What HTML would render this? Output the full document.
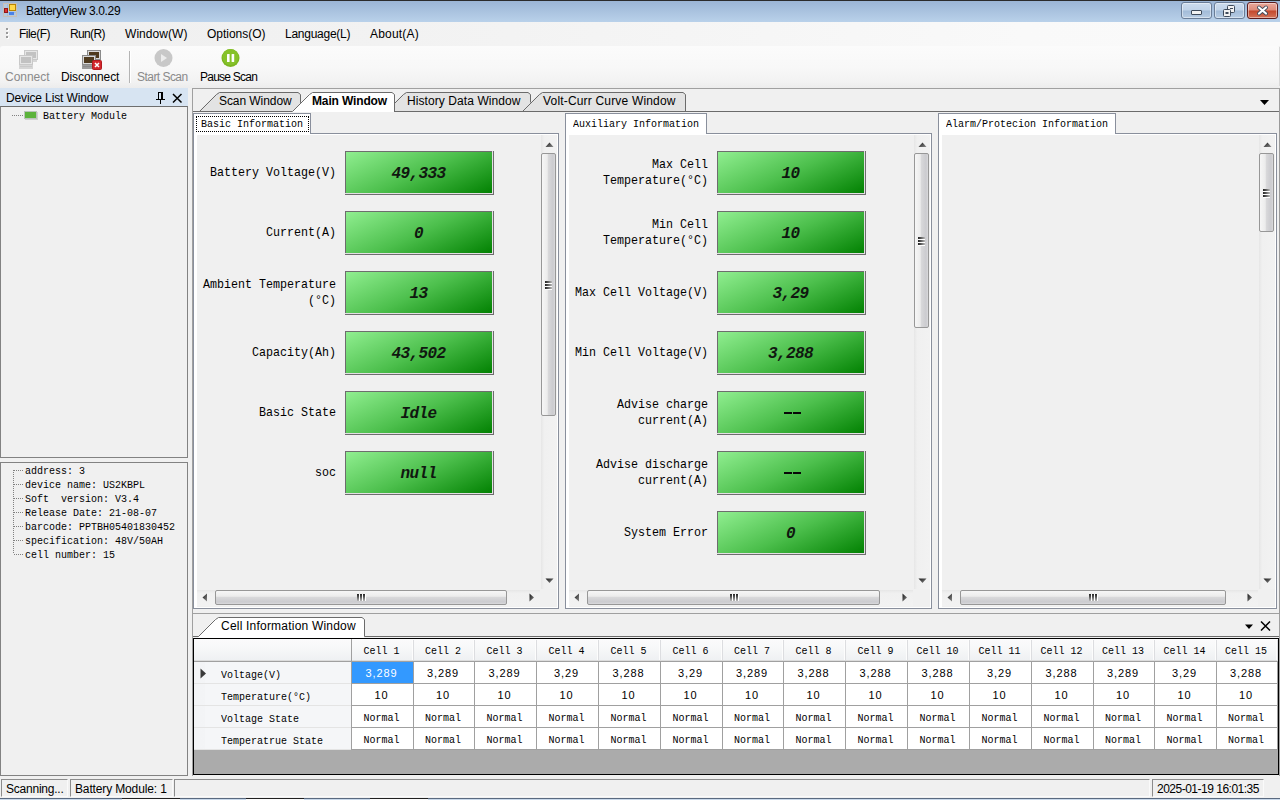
<!DOCTYPE html><html><head><meta charset="utf-8"><style>
*{margin:0;padding:0;box-sizing:border-box}
html,body{width:1280px;height:800px;overflow:hidden;background:#f0f0f0;font-family:"Liberation Sans",sans-serif;font-size:12px;color:#000;position:relative}
.a{position:absolute}
.t{position:absolute;white-space:pre;line-height:14px}
.m6{position:absolute;white-space:pre;font-family:"Liberation Mono",monospace;font-size:11px;line-height:14px;transform:scaleX(.9091);transform-origin:0 0;}
.m7{position:absolute;white-space:pre;font-family:"Liberation Mono",monospace;font-size:13px;line-height:15px;text-align:right;transform:scaleX(.8974);transform-origin:100% 0;}
.gb{position:absolute;width:149px;height:44px;border:1px solid #6d6d6d;background:linear-gradient(155deg,#90ee90 0%,#4cbf4c 50%,#008000 100%)}
.gb:after{content:"";position:absolute;left:-1px;top:-1px;right:0;bottom:0;border-right:1px solid #e4e0e4;border-bottom:1px solid #e4e0e4}
.gv{position:absolute;left:-1px;width:147px;top:13px;text-align:center;white-space:pre;font-family:"Liberation Mono",monospace;font-weight:bold;font-style:italic;font-size:16px;letter-spacing:-0.6px;line-height:18px;color:#101810}
.vthumb{position:absolute;border:1px solid #979797;border-radius:2px;background:linear-gradient(90deg,#f6f6f6 0%,#ececec 40%,#d8d8da 50%,#cbcbcf 85%,#dadadc 100%)}
.hthumb{position:absolute;border:1px solid #979797;border-radius:2px;background:linear-gradient(180deg,#f6f6f6 0%,#ececec 40%,#d8d8da 50%,#cbcbcf 85%,#dadadc 100%)}
.cell{position:absolute;height:14px;text-align:center;white-space:pre;font-family:"Liberation Mono",monospace;font-size:11px;line-height:14px;transform:scaleX(.9091);transform-origin:50% 0;}
</style></head><body>
<div class="a" style="left:0px;top:0px;width:1280px;height:1px;background:#2b2b2b"></div>
<div class="a" style="left:0px;top:1px;width:1280px;height:21px;background:linear-gradient(#9bb5d5,#b9d1ea)"></div>
<svg class="a" style="left:3px;top:3px" width="14" height="14" viewBox="0 0 14 14">
<rect x="0.5" y="0.5" width="13" height="13" fill="#b4c9de" stroke="#c9c0b6"/>
<line x1="4.5" y1="1" x2="4.5" y2="13" stroke="#a8bcd2"/><line x1="1" y1="9.5" x2="13" y2="9.5" stroke="#a8bcd2"/>
<rect x="9" y="3.5" width="4" height="0" fill="none"/>
<rect x="6.5" y="1.5" width="6" height="6" fill="#ffd84a" stroke="#b98500"/>
<rect x="1.5" y="5.5" width="3" height="4" fill="#e03030" stroke="#901818"/>
<rect x="6" y="9" width="5" height="3" fill="#4a82e8"/>
</svg>
<div class="t" style="left:26px;top:4px;letter-spacing:-0.35px;">BatteryView 3.0.29</div>
<div class="a" style="left:1181px;top:2px;width:31px;height:17px;border:1px solid #6a7d97;border-radius:3px;background:linear-gradient(#ccdcee 0%,#c0d3e8 48%,#a2bbd8 52%,#b7cce3 100%);box-shadow:inset 0 0 0 1px rgba(255,255,255,.45)"></div>
<div class="a" style="left:1214px;top:2px;width:31px;height:17px;border:1px solid #6a7d97;border-radius:3px;background:linear-gradient(#ccdcee 0%,#c0d3e8 48%,#a2bbd8 52%,#b7cce3 100%);box-shadow:inset 0 0 0 1px rgba(255,255,255,.45)"></div>
<div class="a" style="left:1247px;top:2px;width:31px;height:17px;border:1px solid #5d1c1c;border-radius:3px;background:linear-gradient(#e9a99b 0%,#dd8a78 48%,#c3472b 52%,#d47358 100%);box-shadow:inset 0 0 0 1px rgba(255,255,255,.45)"></div>
<div class="a" style="left:1191px;top:10px;width:11px;height:5px;background:#f2f2f2;border:1px solid #3e4a5a;border-radius:1px"></div>
<svg class="a" style="left:1223px;top:5px" width="13" height="12" viewBox="0 0 13 12"><rect x="4.5" y="0.5" width="7" height="7" rx="1" fill="#f2f2f2" stroke="#3e4a5a"/><rect x="0.5" y="4.5" width="7" height="7" rx="1" fill="#f2f2f2" stroke="#3e4a5a"/><rect x="2.5" y="7" width="3" height="2" fill="#3e4a5a"/><rect x="7" y="3" width="3" height="1" fill="#3e4a5a"/></svg>
<svg class="a" style="left:1256px;top:5px" width="13" height="11" viewBox="0 0 13 11"><path d="M3 2.5 L10 8.5 M10 2.5 L3 8.5" stroke="#3e4a5a" stroke-width="3.8" stroke-linecap="round"/><path d="M3 2.5 L10 8.5 M10 2.5 L3 8.5" stroke="#ffffff" stroke-width="2.2" stroke-linecap="round"/></svg>
<div class="a" style="left:0px;top:22px;width:1280px;height:24px;background:linear-gradient(90deg,#efefef 0%,#f3f3f3 40%,#f9f9f9 80%,#fafafa 100%)"></div>
<div class="a" style="left:6px;top:28px;width:2px;height:2px;background:#9a9a9a;box-shadow:1px 1px 0 #fff"></div>
<div class="a" style="left:6px;top:32px;width:2px;height:2px;background:#9a9a9a;box-shadow:1px 1px 0 #fff"></div>
<div class="a" style="left:6px;top:36px;width:2px;height:2px;background:#9a9a9a;box-shadow:1px 1px 0 #fff"></div>
<div class="t" style="left:19px;top:27px;letter-spacing:-0.53px;">File(F)</div>
<div class="t" style="left:70px;top:27px;letter-spacing:-0.63px;">Run(R)</div>
<div class="t" style="left:125px;top:27px;letter-spacing:0.06px;">Window(W)</div>
<div class="t" style="left:207px;top:27px;letter-spacing:-0.02px;">Options(O)</div>
<div class="t" style="left:285px;top:27px;letter-spacing:-0.26px;">Language(L)</div>
<div class="t" style="left:370px;top:27px;letter-spacing:0.2px;">About(A)</div>
<div class="a" style="left:0px;top:46px;width:1280px;height:42px;border-radius:3px 3px 0 0;background:linear-gradient(#fbfbfb 0%,#f8f8f8 50%,#f2f2f2 85%,#ececec 100%)"></div>
<div class="t" style="left:5px;top:70px;letter-spacing:-0.03px;color:#8a8a8a">Connect</div>
<div class="t" style="left:61px;top:70px;letter-spacing:-0.11px;">Disconnect</div>
<div class="a" style="left:129px;top:51px;width:1px;height:32px;background:#b4b4b4;box-shadow:1px 0 0 #fff"></div>
<div class="t" style="left:137px;top:70px;letter-spacing:-0.54px;color:#8a8a8a">Start Scan</div>
<div class="t" style="left:200px;top:70px;letter-spacing:-0.75px;">Pause Scan</div>
<svg class="a" style="left:18px;top:49px" width="21" height="21" viewBox="0 0 21 21">
<rect x="6.5" y="1.5" width="13" height="9" fill="#e6e6e6" stroke="#c9c9c9"/><rect x="8" y="3" width="10" height="6" fill="#c2c2c2"/>
<rect x="14" y="11" width="5" height="2" fill="#d6d6d6"/>
<rect x="1.5" y="6.5" width="13" height="9" fill="#e6e6e6" stroke="#c9c9c9"/><rect x="3" y="8" width="10" height="6" fill="#c2c2c2"/>
<rect x="1" y="16" width="14" height="4" fill="#d6d6d6"/><rect x="2" y="17" width="12" height="1" fill="#c9c9c9"/></svg>
<svg class="a" style="left:81px;top:49px" width="21" height="21" viewBox="0 0 21 21">
<rect x="6.5" y="1.5" width="13" height="9" fill="#d9d9d9" stroke="#8a8a8a"/><rect x="8" y="3" width="10" height="6" fill="#4e3a1e"/>
<rect x="14" y="11" width="5" height="2" fill="#9a9a9a"/>
<rect x="1.5" y="6.5" width="13" height="9" fill="#d9d9d9" stroke="#8a8a8a"/><rect x="3" y="8" width="10" height="6" fill="#4e3a1e"/>
<rect x="1" y="16" width="14" height="4" fill="#9a9a9a"/><rect x="2" y="17" width="12" height="1" fill="#8a8a8a"/><rect x="11.5" y="11.5" width="9" height="9" rx="1" fill="#d3262b" stroke="#b01b1f"/><path d="M14 14 L18 18 M18 14 L14 18" stroke="#fff" stroke-width="1.5"/></svg>
<svg class="a" style="left:153px;top:48px" width="21" height="21" viewBox="0 0 21 21"><circle cx="10.5" cy="10" r="9" fill="#c8c8c8"/><path d="M8 6 L14 10 L8 14Z" fill="#ececec"/></svg>
<svg class="a" style="left:220px;top:48px" width="21" height="21" viewBox="0 0 21 21"><circle cx="10.5" cy="10" r="9" fill="#7cb621"/><circle cx="10.5" cy="9" r="8" fill="#86c22a"/><rect x="7" y="6" width="2.6" height="8" rx="0.5" fill="#fff"/><rect x="11.6" y="6" width="2.6" height="8" rx="0.5" fill="#fff"/></svg>
<div class="a" style="left:1279px;top:47px;width:1px;height:39px;background:#d8d8d8"></div>
<div class="a" style="left:0px;top:88px;width:188px;height:18px;background:#d7e4f2"></div>
<div class="t" style="left:6px;top:91px;letter-spacing:-0.13px;">Device List Window</div>
<svg class="a" style="left:156px;top:92px" width="10" height="12" viewBox="0 0 10 12"><rect x="2" y="0" width="5" height="1" fill="#000"/><rect x="2" y="1" width="1" height="6" fill="#000"/><rect x="5" y="1" width="2" height="6" fill="#000"/><rect x="0" y="7" width="9" height="1" fill="#000"/><rect x="4" y="8" width="1" height="4" fill="#000"/></svg>
<svg class="a" style="left:172px;top:93px" width="11" height="11" viewBox="0 0 11 11"><path d="M1 1 L9.5 9.5 M9.5 1 L1 9.5" stroke="#000" stroke-width="1.5"/></svg>
<div class="a" style="left:0px;top:106px;width:188px;height:352px;border:1px solid #828282;border-top-color:#6e6e6e"></div>
<div class="a" style="left:0px;top:462px;width:188px;height:314px;border:1px solid #828282"></div>
<div class="a" style="left:12px;top:115px;width:11px;height:1px;background-image:linear-gradient(90deg,#808080 50%,transparent 50%);background-size:2px 1px"></div>
<div class="a" style="left:24px;top:111px;width:13px;height:8px;background:#5cb33b;border:1px solid #b9c4b9;box-shadow:1px 1px 0 #d0d0d0"></div>
<div class="m6" style="left:43px;top:109px;">Battery Module</div>
<div class="m6" style="left:25px;top:464px;">address: 3</div>
<div class="a" style="left:14px;top:470px;width:9px;height:1px;background-image:linear-gradient(90deg,#808080 50%,transparent 50%);background-size:2px 1px"></div>
<div class="m6" style="left:25px;top:478px;">device name: US2KBPL</div>
<div class="a" style="left:14px;top:484px;width:9px;height:1px;background-image:linear-gradient(90deg,#808080 50%,transparent 50%);background-size:2px 1px"></div>
<div class="m6" style="left:25px;top:492px;">Soft  version: V3.4</div>
<div class="a" style="left:14px;top:498px;width:9px;height:1px;background-image:linear-gradient(90deg,#808080 50%,transparent 50%);background-size:2px 1px"></div>
<div class="m6" style="left:25px;top:506px;">Release Date: 21-08-07</div>
<div class="a" style="left:14px;top:512px;width:9px;height:1px;background-image:linear-gradient(90deg,#808080 50%,transparent 50%);background-size:2px 1px"></div>
<div class="m6" style="left:25px;top:520px;">barcode: PPTBH05401830452</div>
<div class="a" style="left:14px;top:526px;width:9px;height:1px;background-image:linear-gradient(90deg,#808080 50%,transparent 50%);background-size:2px 1px"></div>
<div class="m6" style="left:25px;top:534px;">specification: 48V/50AH</div>
<div class="a" style="left:14px;top:540px;width:9px;height:1px;background-image:linear-gradient(90deg,#808080 50%,transparent 50%);background-size:2px 1px"></div>
<div class="m6" style="left:25px;top:548px;">cell number: 15</div>
<div class="a" style="left:14px;top:554px;width:9px;height:1px;background-image:linear-gradient(90deg,#808080 50%,transparent 50%);background-size:2px 1px"></div>
<div class="a" style="left:13px;top:470px;width:1px;height:84px;background-image:linear-gradient(#808080 50%,transparent 50%);background-size:1px 2px"></div>
<div class="a" style="left:192px;top:88px;width:1088px;height:526px;border:1px solid #a0a0a0;border-right-color:#9a9a9a"></div>
<div class="a" style="left:193px;top:111px;width:1086px;height:1px;background:#6b6b6b"></div>
<svg class="a" style="left:0;top:0" width="1280" height="120"><polygon points="199,111 216,94 219,92 298,92 300,94 300,111" fill="#e3e3e3"/><polyline points="199.5,111.5 216.5,94.5 219.5,92.5 298,92.5 300.5,94.5 300.5,111.5" fill="none" stroke="#6b6b6b" stroke-width="1"/></svg>
<div class="t" style="left:219px;top:94px;letter-spacing:-0.07px;">Scan Window</div>
<svg class="a" style="left:0;top:0" width="1280" height="120"><polygon points="386,111 403,94 406,92 528,92 530,94 530,111" fill="#e3e3e3"/><polyline points="386.5,111.5 403.5,94.5 406.5,92.5 528,92.5 530.5,94.5 530.5,111.5" fill="none" stroke="#6b6b6b" stroke-width="1"/></svg>
<div class="t" style="left:407px;top:94px;letter-spacing:0.08px;">History Data Window</div>
<svg class="a" style="left:0;top:0" width="1280" height="120"><polygon points="522,111 539,94 542,92 683,92 685,94 685,111" fill="#e3e3e3"/><polyline points="522.5,111.5 539.5,94.5 542.5,92.5 683,92.5 685.5,94.5 685.5,111.5" fill="none" stroke="#6b6b6b" stroke-width="1"/></svg>
<div class="t" style="left:543px;top:94px;letter-spacing:0.18px;">Volt-Curr Curve Window</div>
<svg class="a" style="left:0;top:0" width="1280" height="120"><polygon points="292,112 309,94 312,92 392,92 394,94 394,112" fill="#ffffff"/><polyline points="292.5,111.5 309.5,94.5 312.5,92.5 392,92.5 394.5,94.5 394.5,111.5" fill="none" stroke="#6b6b6b" stroke-width="1"/></svg>
<div class="t" style="left:312px;top:94px;letter-spacing:-0.14px;font-weight:bold">Main Window</div>
<svg class="a" style="left:1259px;top:99px" width="11" height="7" viewBox="0 0 11 7"><path d="M1 1 L10 1 L5.5 6Z" fill="#000"/></svg>
<div class="a" style="left:193px;top:113px;width:118px;height:21px;background:#fff;border:1px solid #898f9c;border-bottom:none"></div>
<div class="a" style="left:193px;top:133px;width:366px;height:476px;border:1px solid #898f9c;background:#fff"></div>
<div class="a" style="left:194px;top:133px;width:116px;height:2px;background:#fff"></div>
<div class="a" style="left:197px;top:135px;width:360px;height:472px;background:#f0f0f0"></div>
<div class="m6" style="left:201px;top:114px;line-height:20px">Basic Information</div>
<div class="a" style="left:196px;top:116px;width:113px;height:16px;border:1px dotted #000"></div>
<div class="a" style="left:541px;top:135px;width:16px;height:454px;background:linear-gradient(90deg,#e6e6e6 0%,#f0f0f0 20%,#f2f2f2 100%)"></div>
<svg class="a" style="left:545px;top:142px" width="9" height="6" viewBox="0 0 9 6"><defs><linearGradient id="ga" x1="0" y1="0" x2="1" y2="1"><stop offset="0" stop-color="#1a1a1a"/><stop offset="1" stop-color="#8a8a8a"/></linearGradient></defs><path d="M0.5 5 L4.5 0.5 L8.5 5Z" fill="url(#ga)"/></svg>
<svg class="a" style="left:545px;top:578px" width="9" height="6" viewBox="0 0 9 6"><path d="M0.5 0.5 L8.5 0.5 L4.5 5Z" fill="url(#ga)"/></svg>
<div class="vthumb" style="left:541px;top:153px;width:15px;height:263px"></div>
<div class="a" style="left:545px;top:281px;width:7px;height:2px;background:linear-gradient(90deg,#222 0%,#555 40%,#bbb 100%);height:1.6px;box-shadow:0 1px 0 #fff"></div>
<div class="a" style="left:545px;top:284px;width:7px;height:2px;background:linear-gradient(90deg,#222 0%,#555 40%,#bbb 100%);height:1.6px;box-shadow:0 1px 0 #fff"></div>
<div class="a" style="left:545px;top:287px;width:7px;height:2px;background:linear-gradient(90deg,#222 0%,#555 40%,#bbb 100%);height:1.6px;box-shadow:0 1px 0 #fff"></div>
<div class="a" style="left:197px;top:590px;width:343px;height:16px;background:linear-gradient(#e6e6e6 0%,#f0f0f0 20%,#f2f2f2 100%)"></div>
<svg class="a" style="left:202px;top:593px" width="6" height="9" viewBox="0 0 6 9"><path d="M5 0.5 L0.5 4.5 L5 8.5Z" fill="url(#ga)"/></svg>
<svg class="a" style="left:529px;top:593px" width="6" height="9" viewBox="0 0 6 9"><path d="M0.5 0.5 L5 4.5 L0.5 8.5Z" fill="url(#ga)"/></svg>
<div class="hthumb" style="left:215px;top:590px;width:292px;height:15px"></div>
<div class="a" style="left:357px;top:594px;width:2px;height:7px;background:linear-gradient(#222 0%,#555 40%,#bbb 100%);width:1.6px;box-shadow:1px 0 0 #fff"></div>
<div class="a" style="left:360px;top:594px;width:2px;height:7px;background:linear-gradient(#222 0%,#555 40%,#bbb 100%);width:1.6px;box-shadow:1px 0 0 #fff"></div>
<div class="a" style="left:363px;top:594px;width:2px;height:7px;background:linear-gradient(#222 0%,#555 40%,#bbb 100%);width:1.6px;box-shadow:1px 0 0 #fff"></div>
<div class="a" style="left:565px;top:113px;width:142px;height:21px;background:#fff;border:1px solid #898f9c;border-bottom:none"></div>
<div class="a" style="left:565px;top:133px;width:367px;height:476px;border:1px solid #898f9c;background:#fff"></div>
<div class="a" style="left:566px;top:133px;width:140px;height:2px;background:#fff"></div>
<div class="a" style="left:569px;top:135px;width:361px;height:472px;background:#f0f0f0"></div>
<div class="m6" style="left:573px;top:114px;line-height:20px">Auxiliary Information</div>
<div class="a" style="left:914px;top:135px;width:16px;height:454px;background:linear-gradient(90deg,#e6e6e6 0%,#f0f0f0 20%,#f2f2f2 100%)"></div>
<svg class="a" style="left:918px;top:142px" width="9" height="6" viewBox="0 0 9 6"><defs><linearGradient id="ga" x1="0" y1="0" x2="1" y2="1"><stop offset="0" stop-color="#1a1a1a"/><stop offset="1" stop-color="#8a8a8a"/></linearGradient></defs><path d="M0.5 5 L4.5 0.5 L8.5 5Z" fill="url(#ga)"/></svg>
<svg class="a" style="left:918px;top:578px" width="9" height="6" viewBox="0 0 9 6"><path d="M0.5 0.5 L8.5 0.5 L4.5 5Z" fill="url(#ga)"/></svg>
<div class="vthumb" style="left:914px;top:153px;width:15px;height:175px"></div>
<div class="a" style="left:918px;top:237px;width:7px;height:2px;background:linear-gradient(90deg,#222 0%,#555 40%,#bbb 100%);height:1.6px;box-shadow:0 1px 0 #fff"></div>
<div class="a" style="left:918px;top:240px;width:7px;height:2px;background:linear-gradient(90deg,#222 0%,#555 40%,#bbb 100%);height:1.6px;box-shadow:0 1px 0 #fff"></div>
<div class="a" style="left:918px;top:243px;width:7px;height:2px;background:linear-gradient(90deg,#222 0%,#555 40%,#bbb 100%);height:1.6px;box-shadow:0 1px 0 #fff"></div>
<div class="a" style="left:569px;top:590px;width:344px;height:16px;background:linear-gradient(#e6e6e6 0%,#f0f0f0 20%,#f2f2f2 100%)"></div>
<svg class="a" style="left:574px;top:593px" width="6" height="9" viewBox="0 0 6 9"><path d="M5 0.5 L0.5 4.5 L5 8.5Z" fill="url(#ga)"/></svg>
<svg class="a" style="left:902px;top:593px" width="6" height="9" viewBox="0 0 6 9"><path d="M0.5 0.5 L5 4.5 L0.5 8.5Z" fill="url(#ga)"/></svg>
<div class="hthumb" style="left:587px;top:590px;width:293px;height:15px"></div>
<div class="a" style="left:730px;top:594px;width:2px;height:7px;background:linear-gradient(#222 0%,#555 40%,#bbb 100%);width:1.6px;box-shadow:1px 0 0 #fff"></div>
<div class="a" style="left:733px;top:594px;width:2px;height:7px;background:linear-gradient(#222 0%,#555 40%,#bbb 100%);width:1.6px;box-shadow:1px 0 0 #fff"></div>
<div class="a" style="left:736px;top:594px;width:2px;height:7px;background:linear-gradient(#222 0%,#555 40%,#bbb 100%);width:1.6px;box-shadow:1px 0 0 #fff"></div>
<div class="a" style="left:938px;top:113px;width:178px;height:21px;background:#fff;border:1px solid #898f9c;border-bottom:none"></div>
<div class="a" style="left:938px;top:133px;width:339px;height:476px;border:1px solid #898f9c;background:#fff"></div>
<div class="a" style="left:939px;top:133px;width:176px;height:2px;background:#fff"></div>
<div class="a" style="left:942px;top:135px;width:333px;height:472px;background:#f0f0f0"></div>
<div class="m6" style="left:946px;top:114px;line-height:20px">Alarm/Protecion Information</div>
<div class="a" style="left:1259px;top:135px;width:16px;height:454px;background:linear-gradient(90deg,#e6e6e6 0%,#f0f0f0 20%,#f2f2f2 100%)"></div>
<svg class="a" style="left:1263px;top:142px" width="9" height="6" viewBox="0 0 9 6"><defs><linearGradient id="ga" x1="0" y1="0" x2="1" y2="1"><stop offset="0" stop-color="#1a1a1a"/><stop offset="1" stop-color="#8a8a8a"/></linearGradient></defs><path d="M0.5 5 L4.5 0.5 L8.5 5Z" fill="url(#ga)"/></svg>
<svg class="a" style="left:1263px;top:578px" width="9" height="6" viewBox="0 0 9 6"><path d="M0.5 0.5 L8.5 0.5 L4.5 5Z" fill="url(#ga)"/></svg>
<div class="vthumb" style="left:1259px;top:153px;width:15px;height:79px"></div>
<div class="a" style="left:1263px;top:189px;width:7px;height:2px;background:linear-gradient(90deg,#222 0%,#555 40%,#bbb 100%);height:1.6px;box-shadow:0 1px 0 #fff"></div>
<div class="a" style="left:1263px;top:192px;width:7px;height:2px;background:linear-gradient(90deg,#222 0%,#555 40%,#bbb 100%);height:1.6px;box-shadow:0 1px 0 #fff"></div>
<div class="a" style="left:1263px;top:195px;width:7px;height:2px;background:linear-gradient(90deg,#222 0%,#555 40%,#bbb 100%);height:1.6px;box-shadow:0 1px 0 #fff"></div>
<div class="a" style="left:942px;top:590px;width:316px;height:16px;background:linear-gradient(#e6e6e6 0%,#f0f0f0 20%,#f2f2f2 100%)"></div>
<svg class="a" style="left:947px;top:593px" width="6" height="9" viewBox="0 0 6 9"><path d="M5 0.5 L0.5 4.5 L5 8.5Z" fill="url(#ga)"/></svg>
<svg class="a" style="left:1247px;top:593px" width="6" height="9" viewBox="0 0 6 9"><path d="M0.5 0.5 L5 4.5 L0.5 8.5Z" fill="url(#ga)"/></svg>
<div class="hthumb" style="left:960px;top:590px;width:266px;height:15px"></div>
<div class="a" style="left:1089px;top:594px;width:2px;height:7px;background:linear-gradient(#222 0%,#555 40%,#bbb 100%);width:1.6px;box-shadow:1px 0 0 #fff"></div>
<div class="a" style="left:1092px;top:594px;width:2px;height:7px;background:linear-gradient(#222 0%,#555 40%,#bbb 100%);width:1.6px;box-shadow:1px 0 0 #fff"></div>
<div class="a" style="left:1095px;top:594px;width:2px;height:7px;background:linear-gradient(#222 0%,#555 40%,#bbb 100%);width:1.6px;box-shadow:1px 0 0 #fff"></div>
<div class="gb" style="left:345px;top:151px"><div class="gv">49,333</div></div>
<div class="m7" style="left:136px;top:165px;width:200px">Battery Voltage(V)</div>
<div class="gb" style="left:345px;top:211px"><div class="gv">0</div></div>
<div class="m7" style="left:136px;top:225px;width:200px">Current(A)</div>
<div class="gb" style="left:345px;top:271px"><div class="gv">13</div></div>
<div class="m7" style="left:136px;top:277px;width:200px;line-height:16px">Ambient Temperature
(°C)</div>
<div class="gb" style="left:345px;top:331px"><div class="gv">43,502</div></div>
<div class="m7" style="left:136px;top:345px;width:200px">Capacity(Ah)</div>
<div class="gb" style="left:345px;top:391px"><div class="gv">Idle</div></div>
<div class="m7" style="left:136px;top:405px;width:200px">Basic State</div>
<div class="gb" style="left:345px;top:451px"><div class="gv">null</div></div>
<div class="m7" style="left:136px;top:465px;width:200px">soc</div>
<div class="gb" style="left:717px;top:151px"><div class="gv">10</div></div>
<div class="m7" style="left:508px;top:157px;width:200px;line-height:16px">Max Cell
Temperature(°C)</div>
<div class="gb" style="left:717px;top:211px"><div class="gv">10</div></div>
<div class="m7" style="left:508px;top:217px;width:200px;line-height:16px">Min Cell
Temperature(°C)</div>
<div class="gb" style="left:717px;top:271px"><div class="gv">3,29</div></div>
<div class="m7" style="left:508px;top:285px;width:200px">Max Cell Voltage(V)</div>
<div class="gb" style="left:717px;top:331px"><div class="gv">3,288</div></div>
<div class="m7" style="left:508px;top:345px;width:200px">Min Cell Voltage(V)</div>
<div class="gb" style="left:717px;top:391px"><div class="a" style="left:66px;top:20px;width:8px;height:2px;background:#080808"></div><div class="a" style="left:75px;top:20px;width:8px;height:2px;background:#080808"></div></div>
<div class="m7" style="left:508px;top:397px;width:200px;line-height:16px">Advise charge
current(A)</div>
<div class="gb" style="left:717px;top:451px"><div class="a" style="left:66px;top:20px;width:8px;height:2px;background:#080808"></div><div class="a" style="left:75px;top:20px;width:8px;height:2px;background:#080808"></div></div>
<div class="m7" style="left:508px;top:457px;width:200px;line-height:16px">Advise discharge
current(A)</div>
<div class="gb" style="left:717px;top:511px"><div class="gv">0</div></div>
<div class="m7" style="left:508px;top:525px;width:200px">System Error</div>
<div class="a" style="left:192px;top:614px;width:1088px;height:162px;background:#f0f0f0;border-left:1px solid #a0a0a0;border-right:1px solid #a0a0a0"></div>
<div class="a" style="left:193px;top:636px;width:6px;height:1px;background:#6b6b6b"></div>
<svg class="a" style="left:0;top:600px" width="1280" height="40"><polygon points="198,37 215,19 218,17 362,17 364,19 364,38 198,38" fill="#fff"/><polyline points="193,36.5 198.5,36.5 215.5,19.5 218.5,17.5 362,17.5 364.5,19.5 364.5,36.5 1279,36.5" fill="none" stroke="#6b6b6b"/></svg>
<div class="t" style="left:221px;top:619px;letter-spacing:0.21px;">Cell Information Window</div>
<svg class="a" style="left:1244px;top:624px" width="10" height="6" viewBox="0 0 10 6"><path d="M1 0.5 L9 0.5 L5 5Z" fill="#000"/></svg>
<svg class="a" style="left:1260px;top:621px" width="11" height="10" viewBox="0 0 11 10"><path d="M1 0.5 L10 9.5 M10 0.5 L1 9.5" stroke="#000" stroke-width="1.5"/></svg>
<div class="a" style="left:193px;top:638px;width:1086px;height:137px;border:1px solid #000;background:#ababab"></div>
<div class="a" style="left:194px;top:639px;width:1084px;height:22px;background:linear-gradient(#fbfbfc 0%,#f7f8f9 40%,#eef0f2 100%)"></div>
<div class="a" style="left:194px;top:661px;width:1084px;height:1px;background:#a0a0a0"></div>
<div class="a" style="left:194px;top:660px;width:1084px;height:1px;background:#dcdcdc"></div>
<div class="a" style="left:194px;top:662px;width:157px;height:21px;background:linear-gradient(90deg,#f3f4f6 0%,#f5f6f8 100%)"></div>
<div class="a" style="left:205px;top:662px;width:146px;height:21px;background:#f5f6f8"></div>
<div class="a" style="left:194px;top:683px;width:157px;height:1px;background:#e4e4e4"></div>
<div class="m6" style="left:221px;top:668px;">Voltage(V)</div>
<div class="a" style="left:352px;top:662px;width:926px;height:21px;background:#fff"></div>
<div class="a" style="left:352px;top:683px;width:926px;height:1px;background:#a0a0a0"></div>
<div class="a" style="left:194px;top:684px;width:157px;height:21px;background:linear-gradient(90deg,#f3f4f6 0%,#f5f6f8 100%)"></div>
<div class="a" style="left:205px;top:684px;width:146px;height:21px;background:#f5f6f8"></div>
<div class="a" style="left:194px;top:705px;width:157px;height:1px;background:#e4e4e4"></div>
<div class="m6" style="left:221px;top:690px;">Temperature(°C)</div>
<div class="a" style="left:352px;top:684px;width:926px;height:21px;background:#fff"></div>
<div class="a" style="left:352px;top:705px;width:926px;height:1px;background:#a0a0a0"></div>
<div class="a" style="left:194px;top:706px;width:157px;height:21px;background:linear-gradient(90deg,#f3f4f6 0%,#f5f6f8 100%)"></div>
<div class="a" style="left:205px;top:706px;width:146px;height:21px;background:#f5f6f8"></div>
<div class="a" style="left:194px;top:727px;width:157px;height:1px;background:#e4e4e4"></div>
<div class="m6" style="left:221px;top:712px;">Voltage State</div>
<div class="a" style="left:352px;top:706px;width:926px;height:21px;background:#fff"></div>
<div class="a" style="left:352px;top:727px;width:926px;height:1px;background:#a0a0a0"></div>
<div class="a" style="left:194px;top:728px;width:157px;height:21px;background:linear-gradient(90deg,#f3f4f6 0%,#f5f6f8 100%)"></div>
<div class="a" style="left:205px;top:728px;width:146px;height:21px;background:#f5f6f8"></div>
<div class="a" style="left:194px;top:749px;width:157px;height:1px;background:#e4e4e4"></div>
<div class="m6" style="left:221px;top:734px;">Temperatrue State</div>
<div class="a" style="left:352px;top:728px;width:926px;height:21px;background:#fff"></div>
<div class="a" style="left:352px;top:749px;width:926px;height:1px;background:#a0a0a0"></div>
<div class="a" style="left:351px;top:639px;width:1px;height:111px;background:#a0a0a0"></div>
<div class="a" style="left:413px;top:662px;width:1px;height:88px;background:#a0a0a0"></div>
<div class="a" style="left:413px;top:640px;width:1px;height:20px;background:#dcdde0;box-shadow:-1px 0 0 #fdfdfd"></div>
<div class="a" style="left:474px;top:662px;width:1px;height:88px;background:#a0a0a0"></div>
<div class="a" style="left:474px;top:640px;width:1px;height:20px;background:#dcdde0;box-shadow:-1px 0 0 #fdfdfd"></div>
<div class="a" style="left:536px;top:662px;width:1px;height:88px;background:#a0a0a0"></div>
<div class="a" style="left:536px;top:640px;width:1px;height:20px;background:#dcdde0;box-shadow:-1px 0 0 #fdfdfd"></div>
<div class="a" style="left:598px;top:662px;width:1px;height:88px;background:#a0a0a0"></div>
<div class="a" style="left:598px;top:640px;width:1px;height:20px;background:#dcdde0;box-shadow:-1px 0 0 #fdfdfd"></div>
<div class="a" style="left:660px;top:662px;width:1px;height:88px;background:#a0a0a0"></div>
<div class="a" style="left:660px;top:640px;width:1px;height:20px;background:#dcdde0;box-shadow:-1px 0 0 #fdfdfd"></div>
<div class="a" style="left:722px;top:662px;width:1px;height:88px;background:#a0a0a0"></div>
<div class="a" style="left:722px;top:640px;width:1px;height:20px;background:#dcdde0;box-shadow:-1px 0 0 #fdfdfd"></div>
<div class="a" style="left:783px;top:662px;width:1px;height:88px;background:#a0a0a0"></div>
<div class="a" style="left:783px;top:640px;width:1px;height:20px;background:#dcdde0;box-shadow:-1px 0 0 #fdfdfd"></div>
<div class="a" style="left:845px;top:662px;width:1px;height:88px;background:#a0a0a0"></div>
<div class="a" style="left:845px;top:640px;width:1px;height:20px;background:#dcdde0;box-shadow:-1px 0 0 #fdfdfd"></div>
<div class="a" style="left:907px;top:662px;width:1px;height:88px;background:#a0a0a0"></div>
<div class="a" style="left:907px;top:640px;width:1px;height:20px;background:#dcdde0;box-shadow:-1px 0 0 #fdfdfd"></div>
<div class="a" style="left:969px;top:662px;width:1px;height:88px;background:#a0a0a0"></div>
<div class="a" style="left:969px;top:640px;width:1px;height:20px;background:#dcdde0;box-shadow:-1px 0 0 #fdfdfd"></div>
<div class="a" style="left:1031px;top:662px;width:1px;height:88px;background:#a0a0a0"></div>
<div class="a" style="left:1031px;top:640px;width:1px;height:20px;background:#dcdde0;box-shadow:-1px 0 0 #fdfdfd"></div>
<div class="a" style="left:1093px;top:662px;width:1px;height:88px;background:#a0a0a0"></div>
<div class="a" style="left:1093px;top:640px;width:1px;height:20px;background:#dcdde0;box-shadow:-1px 0 0 #fdfdfd"></div>
<div class="a" style="left:1154px;top:662px;width:1px;height:88px;background:#a0a0a0"></div>
<div class="a" style="left:1154px;top:640px;width:1px;height:20px;background:#dcdde0;box-shadow:-1px 0 0 #fdfdfd"></div>
<div class="a" style="left:1216px;top:662px;width:1px;height:88px;background:#a0a0a0"></div>
<div class="a" style="left:1216px;top:640px;width:1px;height:20px;background:#dcdde0;box-shadow:-1px 0 0 #fdfdfd"></div>
<div class="a" style="left:1277px;top:662px;width:1px;height:88px;background:#a0a0a0"></div>
<div class="a" style="left:1277px;top:640px;width:1px;height:20px;background:#dcdde0;box-shadow:-1px 0 0 #fdfdfd"></div>
<div class="cell" style="left:351px;top:644px;width:61px">Cell 1</div>
<div class="a" style="left:352px;top:662px;width:61px;height:21px;background:#3399ff"></div>
<div class="cell" style="left:351px;top:667px;width:61px;color:#fff;font-family:Liberation Sans,sans-serif;font-size:11px;letter-spacing:0.9px;transform:none;margin-top:-1px;">3,289</div>
<div class="cell" style="left:351px;top:689px;width:61px;font-family:Liberation Sans,sans-serif;font-size:11px;letter-spacing:0.9px;transform:none;margin-top:-1px;">10</div>
<div class="cell" style="left:351px;top:711px;width:61px;">Normal</div>
<div class="cell" style="left:351px;top:733px;width:61px;">Normal</div>
<div class="cell" style="left:413px;top:644px;width:60px">Cell 2</div>
<div class="cell" style="left:413px;top:667px;width:60px;font-family:Liberation Sans,sans-serif;font-size:11px;letter-spacing:0.9px;transform:none;margin-top:-1px;">3,289</div>
<div class="cell" style="left:413px;top:689px;width:60px;font-family:Liberation Sans,sans-serif;font-size:11px;letter-spacing:0.9px;transform:none;margin-top:-1px;">10</div>
<div class="cell" style="left:413px;top:711px;width:60px;">Normal</div>
<div class="cell" style="left:413px;top:733px;width:60px;">Normal</div>
<div class="cell" style="left:474px;top:644px;width:61px">Cell 3</div>
<div class="cell" style="left:474px;top:667px;width:61px;font-family:Liberation Sans,sans-serif;font-size:11px;letter-spacing:0.9px;transform:none;margin-top:-1px;">3,289</div>
<div class="cell" style="left:474px;top:689px;width:61px;font-family:Liberation Sans,sans-serif;font-size:11px;letter-spacing:0.9px;transform:none;margin-top:-1px;">10</div>
<div class="cell" style="left:474px;top:711px;width:61px;">Normal</div>
<div class="cell" style="left:474px;top:733px;width:61px;">Normal</div>
<div class="cell" style="left:536px;top:644px;width:61px">Cell 4</div>
<div class="cell" style="left:536px;top:667px;width:61px;font-family:Liberation Sans,sans-serif;font-size:11px;letter-spacing:0.9px;transform:none;margin-top:-1px;">3,29</div>
<div class="cell" style="left:536px;top:689px;width:61px;font-family:Liberation Sans,sans-serif;font-size:11px;letter-spacing:0.9px;transform:none;margin-top:-1px;">10</div>
<div class="cell" style="left:536px;top:711px;width:61px;">Normal</div>
<div class="cell" style="left:536px;top:733px;width:61px;">Normal</div>
<div class="cell" style="left:598px;top:644px;width:61px">Cell 5</div>
<div class="cell" style="left:598px;top:667px;width:61px;font-family:Liberation Sans,sans-serif;font-size:11px;letter-spacing:0.9px;transform:none;margin-top:-1px;">3,288</div>
<div class="cell" style="left:598px;top:689px;width:61px;font-family:Liberation Sans,sans-serif;font-size:11px;letter-spacing:0.9px;transform:none;margin-top:-1px;">10</div>
<div class="cell" style="left:598px;top:711px;width:61px;">Normal</div>
<div class="cell" style="left:598px;top:733px;width:61px;">Normal</div>
<div class="cell" style="left:660px;top:644px;width:61px">Cell 6</div>
<div class="cell" style="left:660px;top:667px;width:61px;font-family:Liberation Sans,sans-serif;font-size:11px;letter-spacing:0.9px;transform:none;margin-top:-1px;">3,29</div>
<div class="cell" style="left:660px;top:689px;width:61px;font-family:Liberation Sans,sans-serif;font-size:11px;letter-spacing:0.9px;transform:none;margin-top:-1px;">10</div>
<div class="cell" style="left:660px;top:711px;width:61px;">Normal</div>
<div class="cell" style="left:660px;top:733px;width:61px;">Normal</div>
<div class="cell" style="left:722px;top:644px;width:60px">Cell 7</div>
<div class="cell" style="left:722px;top:667px;width:60px;font-family:Liberation Sans,sans-serif;font-size:11px;letter-spacing:0.9px;transform:none;margin-top:-1px;">3,289</div>
<div class="cell" style="left:722px;top:689px;width:60px;font-family:Liberation Sans,sans-serif;font-size:11px;letter-spacing:0.9px;transform:none;margin-top:-1px;">10</div>
<div class="cell" style="left:722px;top:711px;width:60px;">Normal</div>
<div class="cell" style="left:722px;top:733px;width:60px;">Normal</div>
<div class="cell" style="left:783px;top:644px;width:61px">Cell 8</div>
<div class="cell" style="left:783px;top:667px;width:61px;font-family:Liberation Sans,sans-serif;font-size:11px;letter-spacing:0.9px;transform:none;margin-top:-1px;">3,288</div>
<div class="cell" style="left:783px;top:689px;width:61px;font-family:Liberation Sans,sans-serif;font-size:11px;letter-spacing:0.9px;transform:none;margin-top:-1px;">10</div>
<div class="cell" style="left:783px;top:711px;width:61px;">Normal</div>
<div class="cell" style="left:783px;top:733px;width:61px;">Normal</div>
<div class="cell" style="left:845px;top:644px;width:61px">Cell 9</div>
<div class="cell" style="left:845px;top:667px;width:61px;font-family:Liberation Sans,sans-serif;font-size:11px;letter-spacing:0.9px;transform:none;margin-top:-1px;">3,288</div>
<div class="cell" style="left:845px;top:689px;width:61px;font-family:Liberation Sans,sans-serif;font-size:11px;letter-spacing:0.9px;transform:none;margin-top:-1px;">10</div>
<div class="cell" style="left:845px;top:711px;width:61px;">Normal</div>
<div class="cell" style="left:845px;top:733px;width:61px;">Normal</div>
<div class="cell" style="left:907px;top:644px;width:61px">Cell 10</div>
<div class="cell" style="left:907px;top:667px;width:61px;font-family:Liberation Sans,sans-serif;font-size:11px;letter-spacing:0.9px;transform:none;margin-top:-1px;">3,288</div>
<div class="cell" style="left:907px;top:689px;width:61px;font-family:Liberation Sans,sans-serif;font-size:11px;letter-spacing:0.9px;transform:none;margin-top:-1px;">10</div>
<div class="cell" style="left:907px;top:711px;width:61px;">Normal</div>
<div class="cell" style="left:907px;top:733px;width:61px;">Normal</div>
<div class="cell" style="left:969px;top:644px;width:61px">Cell 11</div>
<div class="cell" style="left:969px;top:667px;width:61px;font-family:Liberation Sans,sans-serif;font-size:11px;letter-spacing:0.9px;transform:none;margin-top:-1px;">3,29</div>
<div class="cell" style="left:969px;top:689px;width:61px;font-family:Liberation Sans,sans-serif;font-size:11px;letter-spacing:0.9px;transform:none;margin-top:-1px;">10</div>
<div class="cell" style="left:969px;top:711px;width:61px;">Normal</div>
<div class="cell" style="left:969px;top:733px;width:61px;">Normal</div>
<div class="cell" style="left:1031px;top:644px;width:61px">Cell 12</div>
<div class="cell" style="left:1031px;top:667px;width:61px;font-family:Liberation Sans,sans-serif;font-size:11px;letter-spacing:0.9px;transform:none;margin-top:-1px;">3,288</div>
<div class="cell" style="left:1031px;top:689px;width:61px;font-family:Liberation Sans,sans-serif;font-size:11px;letter-spacing:0.9px;transform:none;margin-top:-1px;">10</div>
<div class="cell" style="left:1031px;top:711px;width:61px;">Normal</div>
<div class="cell" style="left:1031px;top:733px;width:61px;">Normal</div>
<div class="cell" style="left:1093px;top:644px;width:60px">Cell 13</div>
<div class="cell" style="left:1093px;top:667px;width:60px;font-family:Liberation Sans,sans-serif;font-size:11px;letter-spacing:0.9px;transform:none;margin-top:-1px;">3,289</div>
<div class="cell" style="left:1093px;top:689px;width:60px;font-family:Liberation Sans,sans-serif;font-size:11px;letter-spacing:0.9px;transform:none;margin-top:-1px;">10</div>
<div class="cell" style="left:1093px;top:711px;width:60px;">Normal</div>
<div class="cell" style="left:1093px;top:733px;width:60px;">Normal</div>
<div class="cell" style="left:1154px;top:644px;width:61px">Cell 14</div>
<div class="cell" style="left:1154px;top:667px;width:61px;font-family:Liberation Sans,sans-serif;font-size:11px;letter-spacing:0.9px;transform:none;margin-top:-1px;">3,29</div>
<div class="cell" style="left:1154px;top:689px;width:61px;font-family:Liberation Sans,sans-serif;font-size:11px;letter-spacing:0.9px;transform:none;margin-top:-1px;">10</div>
<div class="cell" style="left:1154px;top:711px;width:61px;">Normal</div>
<div class="cell" style="left:1154px;top:733px;width:61px;">Normal</div>
<div class="cell" style="left:1216px;top:644px;width:60px">Cell 15</div>
<div class="cell" style="left:1216px;top:667px;width:60px;font-family:Liberation Sans,sans-serif;font-size:11px;letter-spacing:0.9px;transform:none;margin-top:-1px;">3,288</div>
<div class="cell" style="left:1216px;top:689px;width:60px;font-family:Liberation Sans,sans-serif;font-size:11px;letter-spacing:0.9px;transform:none;margin-top:-1px;">10</div>
<div class="cell" style="left:1216px;top:711px;width:60px;">Normal</div>
<div class="cell" style="left:1216px;top:733px;width:60px;">Normal</div>
<svg class="a" style="left:200px;top:668px" width="7" height="11" viewBox="0 0 7 11"><path d="M0.5 0.5 L6 5.5 L0.5 10.5Z" fill="#3a3a3a"/></svg>
<div class="a" style="left:0px;top:779px;width:1280px;height:21px;background:#f0f0f0"></div>
<div class="a" style="left:1px;top:779px;width:67px;height:18px;border-left:1px solid #8c8c8c;border-top:1px solid #8c8c8c;border-right:1px solid #fafafa;border-bottom:1px solid #fafafa"></div>
<div class="a" style="left:70px;top:779px;width:103px;height:18px;border-left:1px solid #8c8c8c;border-top:1px solid #8c8c8c;border-right:1px solid #fafafa;border-bottom:1px solid #fafafa"></div>
<div class="a" style="left:174px;top:779px;width:976px;height:18px;border-left:1px solid #8c8c8c;border-top:1px solid #8c8c8c;border-right:1px solid #fafafa;border-bottom:1px solid #fafafa"></div>
<div class="a" style="left:1152px;top:779px;width:112px;height:18px;border-left:1px solid #8c8c8c;border-top:1px solid #8c8c8c;border-right:1px solid #fafafa;border-bottom:1px solid #fafafa"></div>
<div class="t" style="left:6px;top:782px;letter-spacing:-0.23px;">Scanning...</div>
<div class="t" style="left:75px;top:782px;letter-spacing:-0.14px;">Battery Module: 1</div>
<div class="t" style="left:1157px;top:782px;letter-spacing:-0.5px;">2025-01-19 16:01:35</div>
<div class="a" style="left:0px;top:797px;width:1280px;height:1px;background:#f0f0f0"></div>
<div class="a" style="left:0px;top:798px;width:1280px;height:1px;background:#5a6a80"></div>
<div class="a" style="left:0px;top:799px;width:1280px;height:1px;background:#c9d9eb"></div>
<div class="a" style="left:122px;top:798px;width:58px;height:1px;background:#202020"></div>
<div class="a" style="left:122px;top:799px;width:58px;height:1px;background:#fcfcfc"></div>
<div class="a" style="left:246px;top:798px;width:58px;height:1px;background:#202020"></div>
<div class="a" style="left:246px;top:799px;width:58px;height:1px;background:#fcfcfc"></div>
<div class="a" style="left:370px;top:798px;width:58px;height:1px;background:#202020"></div>
<div class="a" style="left:370px;top:799px;width:58px;height:1px;background:#fcfcfc"></div>
</body></html>
